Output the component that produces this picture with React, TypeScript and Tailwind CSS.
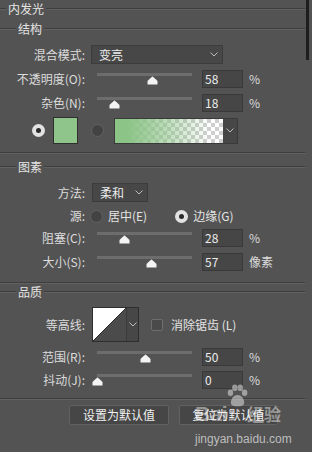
import React from "react";

function HLine({ className = "" }: { className?: string }) {
  return (
    <div className={"flex flex-col " + className}>
      <div className="h-px bg-[#3d3d3d]" />
      <div className="h-px bg-[#626262]" />
    </div>
  );
}

function Header({ text, lead, h }: { text: string; lead: string; h: string }) {
  return (
    <div className={"flex items-center " + h}>
      <HLine className={lead} />
      <span className="px-[2px] leading-[14px] text-[#e4e4e4]">{text}</span>
      <HLine className="flex-1" />
    </div>
  );
}

function Chevron() {
  return (
    <svg width="8" height="5" viewBox="0 0 8 5">
      <polyline points="0.5,0.5 4,4 7.5,0.5" fill="none" stroke="#bdbdbd" strokeWidth="1" />
    </svg>
  );
}

function Label({ children }: { children: React.ReactNode }) {
  return <div className="w-[85px] text-right text-[#dcdcdc] shrink-0">{children}</div>;
}

function Slider({ v }: { v: number }) {
  return (
    <div className="relative w-[95px] h-[18px] ml-[12px] shrink-0">
      <div className="absolute left-0 right-0 top-[3px] h-[3px] bg-[#6d6d6d]" />
      <svg
        className="absolute top-[6px]"
        style={{ left: `${v * 0.95 - 5}px` }}
        width="11"
        height="9"
        viewBox="0 0 11 9"
      >
        <path d="M5.5 0.5 Q6 0.5 10.5 5 V8.5 H0.5 V5 Q5 0.5 5.5 0.5 Z" fill="#f4f4f4" />
      </svg>
    </div>
  );
}

function NumBox({ v }: { v: string }) {
  return (
    <div className="ml-[10px] w-[41px] h-[18px] bg-[#464646] border border-[#393939] text-[#ececec] pl-[2px] leading-[16px] shrink-0">
      {v}
    </div>
  );
}

function SliderRow({ label, v, unit, mt }: { label: string; v: number; unit: string; mt: string }) {
  return (
    <div className={"flex items-center h-[18px] " + mt}>
      <Label>{label}</Label>
      <Slider v={v} />
      <NumBox v={String(v)} />
      <span className="ml-[6px] text-[#dcdcdc]">{unit}</span>
    </div>
  );
}

function RadioOn() {
  return (
    <div className="w-[13px] h-[13px] rounded-full bg-[#e2e2e2] flex items-center justify-center shrink-0">
      <div className="w-[5px] h-[5px] rounded-full bg-[#2a2a2a]" />
    </div>
  );
}

function RadioOff() {
  return <div className="w-[13px] h-[13px] rounded-full bg-[#434343] border border-[#636363] shrink-0" />;
}

export default function App() {
  return (
    <div
      className="relative w-[312px] h-[452px] bg-[#535353] flex overflow-hidden text-[12px] leading-[18px]"
      style={{ fontFamily: '"Noto Sans CJK SC", "Noto Sans", sans-serif' }}
    >
      <div className="w-[305px] flex flex-col">
        {/* Title */}
        <div className="mt-[2px]">
          <Header text="内发光" lead="w-[6px]" h="h-[14px]" />
        </div>

        {/* 结构 */}
        <div className="mt-[6px]">
          <Header text="结构" lead="w-[16px]" h="h-[14px]" />
        </div>

        <div className="flex items-center h-[19px] mt-[9px]">
          <Label>混合模式:</Label>
          <div className="ml-[6px] w-[132px] h-[19px] bg-[#474747] border border-[#3c3c3c] flex items-center justify-between pl-[7px] pr-[4px] text-[#ececec]">
            <span>变亮</span>
            <Chevron />
          </div>
        </div>

        <SliderRow label="不透明度(O):" v={58} unit="%" mt="mt-[6px]" />
        <SliderRow label="杂色(N):" v={18} unit="%" mt="mt-[6px]" />

        <div className="flex items-center h-[27px] mt-[5px] pl-[32px]">
          <RadioOn />
          <div className="ml-[8px] w-[25px] h-[27px] bg-[#8fc58a] border border-[#2f2f2f]" />
          <div className="ml-[13px]">
            <RadioOff />
          </div>
          <div className="ml-[10px] flex h-[26px] border border-[#3a3a3a]">
            <div className="w-[108px] h-full bg-[repeating-conic-gradient(#cfcfcf_0_25%,#ffffff_0_50%)] bg-[length:8px_8px]">
              <div className="w-full h-full bg-[linear-gradient(to_right,#8cc487_0%,#8cc487_12%,rgba(140,196,135,0.55)_50%,rgba(140,196,135,0)_88%)]" />
            </div>
            <div className="w-[14px] h-full bg-[#474747] flex items-center justify-center">
              <Chevron />
            </div>
          </div>
        </div>

        <HLine className="mt-[8px]" />

        {/* 图素 */}
        <div className="mt-[6px]">
          <Header text="图素" lead="w-[16px]" h="h-[14px]" />
        </div>

        <div className="flex items-center h-[19px] mt-[9px]">
          <Label>方法:</Label>
          <div className="ml-[7px] w-[56px] h-[19px] bg-[#474747] border border-[#3c3c3c] flex items-center justify-between pl-[7px] pr-[4px] text-[#ececec]">
            <span>柔和</span>
            <Chevron />
          </div>
        </div>

        <div className="flex items-center h-[18px] mt-[5px]">
          <Label>源:</Label>
          <div className="ml-[5px]">
            <RadioOff />
          </div>
          <span className="ml-[5px] text-[#e4e4e4]">居中(E)</span>
          <div className="ml-[28px]">
            <RadioOn />
          </div>
          <span className="ml-[5px] text-[#e4e4e4]">边缘(G)</span>
        </div>

        <SliderRow label="阻塞(C):" v={28} unit="%" mt="mt-[4px]" />
        <SliderRow label="大小(S):" v={57} unit="像素" mt="mt-[6px]" />

        <HLine className="mt-[11px]" />

        {/* 品质 */}
        <div className="mt-[1px]">
          <Header text="品质" lead="w-[16px]" h="h-[14px]" />
        </div>

        <div className="flex items-center h-[35px] mt-[8px]">
          <Label>等高线:</Label>
          <div className="ml-[7px] flex h-[35px] border border-[#2e2e2e]">
            <svg width="33" height="33" viewBox="0 0 33 33">
              <rect width="33" height="33" fill="#4b4b4b" />
              <polygon points="0,0 33,0 0,33" fill="#ffffff" />
              <line x1="0" y1="33" x2="33" y2="0" stroke="#2a2a2a" strokeWidth="1" />
            </svg>
            <div className="w-[12px] h-full bg-[#474747] border-l border-[#3a3a3a] flex items-center justify-center">
              <Chevron />
            </div>
          </div>
          <div className="ml-[12px] w-[12px] h-[12px] rounded-[2px] border border-[#6e6e6e] bg-[#4a4a4a]" />
          <span className="ml-[8px] text-[#e4e4e4]">消除锯齿 (L)</span>
        </div>

        <SliderRow label="范围(R):" v={50} unit="%" mt="mt-[6px]" />
        <SliderRow label="抖动(J):" v={0} unit="%" mt="mt-[5px]" />

        <HLine className="mt-[9px]" />

        <div className="flex items-center mt-[5px] pl-[69px]">
          <div className="w-[100px] h-[20px] rounded-[2px] bg-[#464646] border border-[#616161] flex items-center justify-center text-[#f0f0f0]">
            设置为默认值
          </div>
          <div className="ml-[10px] w-[99px] h-[20px] rounded-[2px] bg-[#464646] border border-[#616161] flex items-center justify-center text-[#f0f0f0]">
            复位为默认值
          </div>
        </div>
      </div>

      <div className="w-[4px] flex flex-col">
        <div className="h-[60px] bg-[#1e1e1e] ml-[1px]" />
      </div>

      {/* watermark */}
      <svg className="absolute left-[224px] top-[384px] pointer-events-none" width="26" height="24" viewBox="0 0 22 22">
        <g fill="#ffffff" fillOpacity="0.45">
          <ellipse cx="5" cy="8" rx="2.5" ry="3" />
          <ellipse cx="9" cy="3.5" rx="2.5" ry="3" />
          <ellipse cx="14" cy="3.5" rx="2.5" ry="3" />
          <ellipse cx="18" cy="8" rx="2.5" ry="3" />
          <path d="M11.5 10 C7 10 4 16 6 19 C8 21 15 21 17 19 C19 16 16 10 11.5 10 Z" />
        </g>
      </svg>
      <span
        className="absolute left-[195px] top-[402px] text-[21px] leading-[24px] font-bold text-[#ffffff]/45 pointer-events-none"
        style={{ fontFamily: '"Liberation Sans", Arial, sans-serif' }}
      >
        Bai
      </span>
      <span className="absolute left-[247px] top-[402px] text-[17px] leading-[24px] font-bold text-[#ffffff]/45 pointer-events-none">
        经验
      </span>
      <span
        className="absolute left-[195px] top-[432px] text-[12px] leading-[15px] text-[#bdbdbd] pointer-events-none"
        style={{ fontFamily: '"Liberation Sans", Arial, sans-serif' }}
      >
        jingyan.baidu.com
      </span>
    </div>
  );
}
